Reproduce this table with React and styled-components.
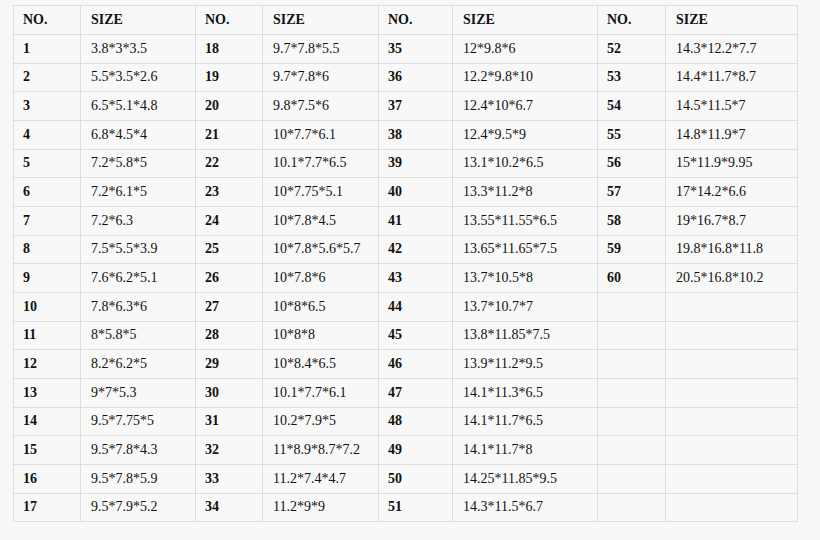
import React from "react";
import styled, { createGlobalStyle } from "styled-components";

const GlobalStyle = createGlobalStyle`
  html, body {
    margin: 0;
    padding: 0;
    background: #f8f8f8;
  }
  body {
    font-family: "Liberation Serif", "Times New Roman", serif;
    color: #111;
  }
`;

const Page = styled.div`
  padding: 5px 0 0 13px;
`;

const Table = styled.table`
  border-collapse: collapse;
  table-layout: fixed;
  width: 784px;
  font-family: "Liberation Serif", "Times New Roman", serif;
  font-size: 14px;
  color: #111;
  background: #f8f8f8;
`;

const HeadCell = styled.th`
  border: 1px solid #dddddd;
  text-align: left;
  font-family: "Liberation Serif", "Times New Roman", serif;
  font-weight: bold;
  padding: 0 0 0 ${(p) => (p.$no ? 9 : 10)}px;
  height: 28px;
  vertical-align: middle;
`;

const Cell = styled.td`
  border: 1px solid #dddddd;
  text-align: left;
  font-family: "Liberation Serif", "Times New Roman", serif;
  padding: 0 0 0 ${(p) => (p.$no ? 9 : 10)}px;
  height: 27.67px;
  font-weight: ${(p) => (p.$no ? "bold" : "normal")};
  vertical-align: middle;
  white-space: nowrap;
`;

const sizes = [
  "3.8*3*3.5", "5.5*3.5*2.6", "6.5*5.1*4.8", "6.8*4.5*4", "7.2*5.8*5",
  "7.2*6.1*5", "7.2*6.3", "7.5*5.5*3.9", "7.6*6.2*5.1", "7.8*6.3*6",
  "8*5.8*5", "8.2*6.2*5", "9*7*5.3", "9.5*7.75*5", "9.5*7.8*4.3",
  "9.5*7.8*5.9", "9.5*7.9*5.2",
  "9.7*7.8*5.5", "9.7*7.8*6", "9.8*7.5*6", "10*7.7*6.1", "10.1*7.7*6.5",
  "10*7.75*5.1", "10*7.8*4.5", "10*7.8*5.6*5.7", "10*7.8*6", "10*8*6.5",
  "10*8*8", "10*8.4*6.5", "10.1*7.7*6.1", "10.2*7.9*5", "11*8.9*8.7*7.2",
  "11.2*7.4*4.7", "11.2*9*9",
  "12*9.8*6", "12.2*9.8*10", "12.4*10*6.7", "12.4*9.5*9", "13.1*10.2*6.5",
  "13.3*11.2*8", "13.55*11.55*6.5", "13.65*11.65*7.5", "13.7*10.5*8",
  "13.7*10.7*7", "13.8*11.85*7.5", "13.9*11.2*9.5", "14.1*11.3*6.5",
  "14.1*11.7*6.5", "14.1*11.7*8", "14.25*11.85*9.5", "14.3*11.5*6.7",
  "14.3*12.2*7.7", "14.4*11.7*8.7", "14.5*11.5*7", "14.8*11.9*7",
  "15*11.9*9.95", "17*14.2*6.6", "19*16.7*8.7", "19.8*16.8*11.8",
  "20.5*16.8*10.2",
];

const widths = [67, 115, 67, 116, 74, 145, 68, 132];

export default function App() {
  const rows = Array.from({ length: 17 }, (_, r) => r);
  return (
    <>
      <GlobalStyle />
      <Page>
        <Table>
          <colgroup>
            {widths.map((w, i) => (
              <col key={i} style={{ width: w }} />
            ))}
          </colgroup>
          <thead>
            <tr>
              {[0, 1, 2, 3].map((g) => (
                <React.Fragment key={g}>
                  <HeadCell $no>NO.</HeadCell>
                  <HeadCell>SIZE</HeadCell>
                </React.Fragment>
              ))}
            </tr>
          </thead>
          <tbody>
            {rows.map((r) => (
              <tr key={r}>
                {[0, 1, 2, 3].map((g) => {
                  const idx = g * 17 + r;
                  const has = idx < sizes.length;
                  return (
                    <React.Fragment key={g}>
                      <Cell $no>{has ? idx + 1 : ""}</Cell>
                      <Cell>{has ? sizes[idx] : ""}</Cell>
                    </React.Fragment>
                  );
                })}
              </tr>
            ))}
          </tbody>
        </Table>
      </Page>
    </>
  );
}
